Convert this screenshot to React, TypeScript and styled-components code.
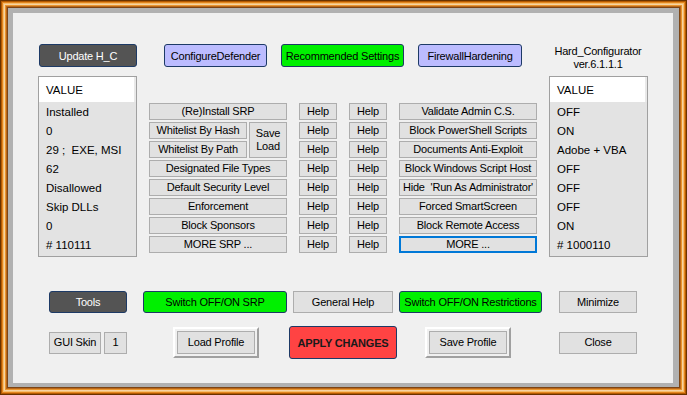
import React from 'react';
import styled, { createGlobalStyle } from 'styled-components';

const Global = createGlobalStyle`
  html, body { margin: 0; padding: 0; background: #f0f0f0; }
  body { font-family: "Liberation Sans", Arial, sans-serif; }
  * { box-sizing: border-box; }
`;

const Frame = styled.div`
  width: 687px;
  height: 395px;
  padding: 13px 14px 12px 13px;
  background: #b1b1b1;
  display: flex;
  box-shadow:
    inset 0 0 0 1px #6a3300,
    inset 0 0 0 2px #b35900,
    inset 0 0 0 3px #e3861f,
    inset 0 0 0 4px #f7bd6c,
    inset 0 0 0 5px #f6d3a2,
    inset 0 0 0 6px #e8952e,
    inset 0 0 0 7px #b9661a,
    inset 0 0 0 8px #7d4514;
`;

const Panel = styled.div`
  flex: 1;
  background: #f0f0f0;
  display: flex;
  flex-direction: column;
  padding-top: 31px;
`;

const TopRow = styled.div`
  display: flex;
  height: 23px;
  margin-left: 26px;
`;

const Rounded = styled.div<{ $w: number; $ml?: number; $bg: string; $fg?: string; $h?: number; $bold?: boolean }>`
  width: ${p => p.$w}px;
  height: ${p => p.$h ?? 23}px;
  margin-left: ${p => p.$ml ?? 0}px;
  background: ${p => p.$bg};
  color: ${p => p.$fg ?? '#000'};
  border: 1px solid #1d3a66;
  border-radius: 3px;
  display: flex;
  align-items: center;
  justify-content: center;
  font-size: 11px;
  letter-spacing: -0.2px;
  font-weight: ${p => (p.$bold ? 700 : 400)};
  white-space: nowrap;
  flex-shrink: 0;
`;

const Title = styled.div<{ $ml: number }>`
  width: 100px;
  margin-left: ${p => p.$ml}px;
  margin-top: 1px;
  text-align: center;
  font-size: 11px;
  letter-spacing: -0.2px;
  line-height: 13px;
  color: #000;
  white-space: nowrap;
`;

const Middle = styled.div`
  display: flex;
  margin-top: 9px;
  margin-left: 25px;
  gap: 12px;
`;

const List = styled.div`
  width: 99px;
  height: 181px;
  border: 1px solid #a0a0a0;
  background: #e3e3e3;
  padding-bottom: 2px;
  display: flex;
  flex-direction: column;
`;

const ListHeader = styled.div`
  height: 25px;
  background: #fff;
  border-right: 2px solid #e9e9e9;
  padding-left: 7px;
  display: flex;
  align-items: center;
  font-size: 11.5px;
  color: #000;
`;

const ListRow = styled.div`
  height: 19px;
  padding-left: 7px;
  display: flex;
  align-items: center;
  font-size: 11.5px;
  color: #000;
  white-space: nowrap;
`;

const ButtonGrid = styled.div`
  padding-top: 27px;
  display: grid;
  grid-template-columns: 138px 38px 38px 138px;
  grid-auto-rows: 17px;
  row-gap: 2px;
  column-gap: 12px;
`;

const Pair = styled.div`
  grid-row: span 2;
  display: grid;
  grid-template-columns: 98px 38px;
  grid-template-rows: 17px 17px;
  gap: 2px;
`;

const Flat = styled.div<{ $focus?: boolean; $span?: boolean; $w?: number; $h?: number; $ml?: number }>`
  ${p => (p.$w ? `width: ${p.$w}px;` : '')}
  ${p => (p.$h ? `height: ${p.$h}px;` : '')}
  margin-left: ${p => p.$ml ?? 0}px;
  background: #e1e1e1;
  border: ${p => (p.$focus ? '2px solid #0078d7' : '1px solid #adadad')};
  display: flex;
  flex-direction: column;
  align-items: center;
  justify-content: center;
  font-size: 11px;
  letter-spacing: -0.2px;
  line-height: 13px;
  color: #000;
  white-space: pre;
  overflow: hidden;
  flex-shrink: 0;
  ${p => (p.$span ? 'grid-row: span 2;' : '')}
`;

const Raised = styled.div<{ $ml: number }>`
  width: 86px;
  height: 31px;
  margin-left: ${p => p.$ml}px;
  padding: 2px;
  border-style: solid;
  border-width: 2px;
  border-color: #ffffff #a0a0a0 #a0a0a0 #ffffff;
  display: flex;
  flex-shrink: 0;
  & > div { flex: 1; }
`;

const BottomRow = styled.div<{ $mt: number; $h: number }>`
  display: flex;
  align-items: center;
  margin-top: ${p => p.$mt}px;
  margin-left: 36px;
  height: ${p => p.$h}px;
`;

const leftValues = ['Installed', '0', '29 ;  EXE, MSI', '62', 'Disallowed', 'Skip DLLs', '0', '# 110111'];
const rightValues = ['OFF', 'ON', 'Adobe + VBA', 'OFF', 'OFF', 'OFF', 'ON', '# 1000110'];

const col3 = [
  'Validate Admin C.S.',
  'Block PowerShell Scripts',
  'Documents Anti-Exploit',
  'Block Windows Script Host',
  "Hide  'Run As Administrator'",
  'Forced SmartScreen',
  'Block Remote Access',
];

const col1Rest = ['Designated File Types', 'Default Security Level', 'Enforcement', 'Block Sponsors'];

function ValueList({ values }: { values: string[] }) {
  return (
    <List>
      <ListHeader>VALUE</ListHeader>
      {values.map((v, i) => (
        <ListRow key={i}>{v.replace(/ /g, '\u00a0')}</ListRow>
      ))}
    </List>
  );
}

export default function App() {
  return (
    <>
      <Global />
      <Frame>
        <Panel>
          <TopRow>
            <Rounded $w={98} $bg="#545454" $fg="#fff">Update H_C</Rounded>
            <Rounded $w={103} $ml={27} $bg="#bcbcff">ConfigureDefender</Rounded>
            <Rounded $w={123} $ml={14} $bg="#00f000">Recommended Settings</Rounded>
            <Rounded $w={104} $ml={14} $bg="#bcbcff">FirewallHardening</Rounded>
            <Title $ml={26}>
              Hard_Configurator
              <br />
              ver.6.1.1.1
            </Title>
          </TopRow>

          <Middle>
            <ValueList values={leftValues} />
            <ButtonGrid>
              <Flat>(Re)Install SRP</Flat>
              <Flat>Help</Flat>
              <Flat>Help</Flat>
              <Flat>{col3[0]}</Flat>

              <Pair>
                <Flat>Whitelist By Hash</Flat>
                <Flat $span>
                  <span>Save</span>
                  <span>Load</span>
                </Flat>
                <Flat>Whitelist By Path</Flat>
              </Pair>
              <Flat>Help</Flat>
              <Flat>Help</Flat>
              <Flat>{col3[1]}</Flat>

              <Flat>Help</Flat>
              <Flat>Help</Flat>
              <Flat>{col3[2]}</Flat>

              {col1Rest.map((t, i) => (
                <React.Fragment key={t}>
                  <Flat>{t}</Flat>
                  <Flat>Help</Flat>
                  <Flat>Help</Flat>
                  <Flat>{col3[3 + i]}</Flat>
                </React.Fragment>
              ))}

              <Flat>MORE SRP ...</Flat>
              <Flat>Help</Flat>
              <Flat>Help</Flat>
              <Flat $focus>MORE ...</Flat>
            </ButtonGrid>
            <ValueList values={rightValues} />
          </Middle>

          <BottomRow $mt={34} $h={22}>
            <Rounded $w={78} $h={22} $bg="#545454" $fg="#fff">Tools</Rounded>
            <Rounded $w={144} $h={22} $ml={16} $bg="#00f000">Switch OFF/ON SRP</Rounded>
            <Flat $w={100} $h={22} $ml={6}>General Help</Flat>
            <Rounded $w={143} $h={22} $ml={6} $bg="#00f000">Switch OFF/ON Restrictions</Rounded>
            <Flat $w={78} $h={22} $ml={17}>Minimize</Flat>
          </BottomRow>

          <BottomRow $mt={13} $h={33}>
            <Flat $w={52} $h={22}>GUI Skin</Flat>
            <Flat $w={23} $h={22} $ml={3}>1</Flat>
            <Raised $ml={46}>
              <Flat>Load Profile</Flat>
            </Raised>
            <Rounded $w={108} $h={33} $ml={30} $bg="#ff4343" $fg="#1a1a1a" $bold>
              APPLY CHANGES
            </Rounded>
            <Raised $ml={28}>
              <Flat>Save Profile</Flat>
            </Raised>
            <Flat $w={78} $h={22} $ml={48}>Close</Flat>
          </BottomRow>
        </Panel>
      </Frame>
    </>
  );
}
